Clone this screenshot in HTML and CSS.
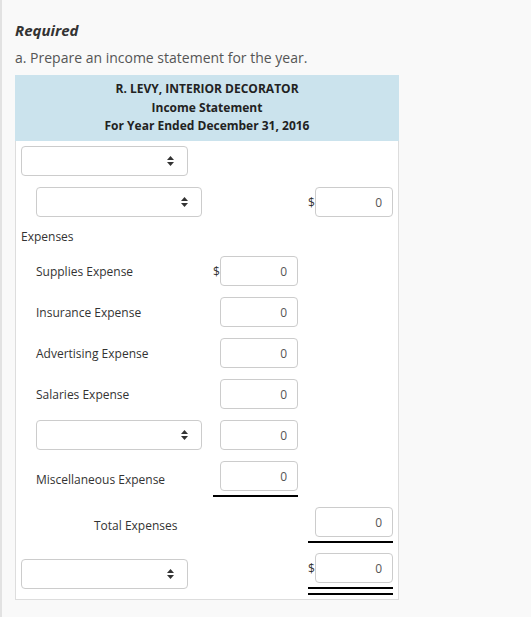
FILE: index.html
```html
<!DOCTYPE html>
<html lang="en">
<head>
    <meta charset="UTF-8">
    <meta name="viewport" content="width=device-width, initial-scale=1.0">
    <title>Income Statement</title>
    <link rel="stylesheet" href="styles.css">
</head>
<body>
<div class="page">

    <p class="req">Required</p>
    <p class="prompt">a. Prepare an income statement for the year.</p>

    <div class="statement">
        <div class="stmt-head">
            <div>R. LEVY, INTERIOR DECORATOR</div>
            <div>Income Statement</div>
            <div>For Year Ended December 31, 2016</div>
        </div>

        <div class="stmt-body">
            <div class="row">
                <div class="cell-label">
                    <div class="select wide"><svg width="7" height="10" viewBox="0 0 7 10"><polygon points="0,4 3.5,0 7,4"/><polygon points="0,6 3.5,10 7,6"/></svg></div>
                </div>
                <div class="col"></div>
                <div class="col"></div>
            </div>

            <div class="row">
                <div class="cell-label indent">
                    <div class="select"><svg width="7" height="10" viewBox="0 0 7 10"><polygon points="0,4 3.5,0 7,4"/><polygon points="0,6 3.5,10 7,6"/></svg></div>
                </div>
                <div class="col"></div>
                <div class="col"><div class="amt"><span class="dollar">$</span><input class="num" value="0"></div></div>
            </div>

            <div class="row heading">
                <div class="cell-label">Expenses</div>
            </div>

            <div class="row">
                <div class="cell-label indent">Supplies Expense</div>
                <div class="col"><div class="amt"><span class="dollar">$</span><input class="num" value="0"></div></div>
                <div class="col"></div>
            </div>

            <div class="row">
                <div class="cell-label indent">Insurance Expense</div>
                <div class="col"><div class="amt"><input class="num" value="0"></div></div>
                <div class="col"></div>
            </div>

            <div class="row">
                <div class="cell-label indent">Advertising Expense</div>
                <div class="col"><div class="amt"><input class="num" value="0"></div></div>
                <div class="col"></div>
            </div>

            <div class="row">
                <div class="cell-label indent">Salaries Expense</div>
                <div class="col"><div class="amt"><input class="num" value="0"></div></div>
                <div class="col"></div>
            </div>

            <div class="row">
                <div class="cell-label indent">
                    <div class="select"><svg width="7" height="10" viewBox="0 0 7 10"><polygon points="0,4 3.5,0 7,4"/><polygon points="0,6 3.5,10 7,6"/></svg></div>
                </div>
                <div class="col"><div class="amt"><input class="num" value="0"></div></div>
                <div class="col"></div>
            </div>

            <div class="row tight">
                <div class="cell-label indent">Miscellaneous Expense</div>
                <div class="col">
                    <div class="amt"><input class="num" value="0"></div>
                    <div class="rule"></div>
                </div>
                <div class="col"></div>
            </div>

            <div class="row tight">
                <div class="cell-label total">Total Expenses</div>
                <div class="col"></div>
                <div class="col">
                    <div class="amt"><input class="num" value="0"></div>
                    <div class="rule"></div>
                </div>
            </div>

            <div class="row last">
                <div class="cell-label">
                    <div class="select wide"><svg width="7" height="10" viewBox="0 0 7 10"><polygon points="0,4 3.5,0 7,4"/><polygon points="0,6 3.5,10 7,6"/></svg></div>
                </div>
                <div class="col"></div>
                <div class="col">
                    <div class="amt"><span class="dollar">$</span><input class="num" value="0"></div>
                    <div class="rule double"></div>
                </div>
            </div>
        </div>
    </div>

</div>
</body>
</html>
```

FILE: styles.css
```css
body {
    margin: 0;
    background: #f9f9f9;
    font-family: 'Open Sans', 'Liberation Sans', sans-serif;
    color: #333;
}
.page {
    min-height: 617px;
    box-sizing: border-box;
    border-left: 2px solid #e2e2e2;
    padding: 20px 0 0 13px;
}
.req {
    margin: 0;
    font-size: 15px;
    font-weight: bold;
    font-style: italic;
    line-height: 20px;
    color: #333;
}
.prompt {
    margin: 8px 0 7px;
    font-size: 14px;
    line-height: 20px;
    color: #555;
}
.statement {
    width: 384px;
}
.stmt-head {
    background: #cbe3ed;
    text-align: center;
    font-size: 12px;
    font-weight: bold;
    line-height: 18.5px;
    color: #222;
    padding: 5px 0 5.5px;
}
.stmt-body {
    background: white;
    border: 1px solid #ddd;
    border-top: none;
    padding: 5px 5px 4px;
}
.row {
    display: grid;
    grid-template-columns: 182px 85px 85px;
    column-gap: 10px;
    align-items: center;
    min-height: 30px;
    margin-bottom: 11px;
    font-size: 12px;
}
.row.heading {
    min-height: 17px;
    line-height: 17px;
}
.row.tight {
    margin-bottom: 10px;
}
.row.last {
    margin-bottom: 0;
}
.cell-label.indent {
    padding-left: 15px;
}
.cell-label.total {
    padding-left: 73px;
}
.select {
    box-sizing: border-box;
    width: 166px;
    height: 30px;
    border: 1px solid #ccc;
    border-radius: 4px;
    background: white;
    display: flex;
    align-items: center;
    justify-content: flex-end;
    padding-right: 13px;
}
.select.wide {
    width: 167px;
}
.select svg {
    fill: #333;
}
.amt {
    display: flex;
    justify-content: flex-end;
    align-items: center;
}
.dollar {
    width: 7px;
    font-size: 12px;
    color: #333;
}
.num {
    box-sizing: border-box;
    width: 78px;
    height: 30px;
    border: 1px solid #ccc;
    border-radius: 4px;
    text-align: right;
    padding: 0 10px 0 4px;
    font-family: 'Open Sans', 'Liberation Sans', sans-serif;
    font-size: 12px;
    color: #555;
    background: white;
}
.rule {
    margin-top: 4px;
    height: 2px;
    background: #000;
}
.rule.double {
    height: 4px;
    background: none;
    border-top: 2px solid #000;
    border-bottom: 2px solid #000;
}
```
